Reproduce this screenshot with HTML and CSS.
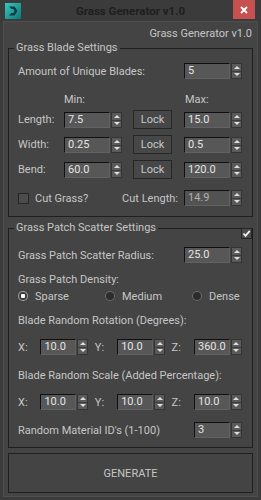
FILE: index.html
```html
<!DOCTYPE html>
<html lang="en">
<head>
  <meta charset="UTF-8">
  <title>Grass Generator v1.0</title>
  <link rel="stylesheet" href="styles.css">
</head>
<body>
  <div class="window">
    <div class="titlebar">
      <svg class="app-icon" viewBox="0 0 16 16">
        <defs>
          <linearGradient id="teal" x1="0" y1="0" x2="1" y2="1">
            <stop offset="0" stop-color="#3cc4c0"/>
            <stop offset="1" stop-color="#0b7a78"/>
          </linearGradient>
        </defs>
        <rect width="16" height="16" fill="url(#teal)"/>
        <path d="M4 3.5 H9.5 L12.5 8 L9.5 12.5 H4 L6.5 10 H8.5 L9.6 8 L8.5 6 H6.5 Z" fill="#0c3d3e"/>
      </svg>
      <div class="title">Grass Generator v1.0</div>
      <div class="close">
        <svg viewBox="0 0 8 8" width="8" height="8"><path d="M1 1 L7 7 M7 1 L1 7" stroke="#fff" stroke-width="1.8"/></svg>
      </div>
    </div>

    <div class="client">
      <div class="version">Grass Generator v1.0</div>

      <fieldset class="group blade">
        <legend>Grass Blade Settings</legend>

        <div class="row amount">
          <span class="span3">Amount of Unique Blades:</span>
          <div class="spinner"><span class="field">5</span><span class="arrows"></span></div>
        </div>

        <div class="row heads">
          <span></span>
          <span>Min:</span>
          <span></span>
          <span class="max">Max:</span>
        </div>

        <div class="row dims">
          <span>Length:</span>
          <div class="spinner"><span class="field">7.5</span><span class="arrows"></span></div>
          <div class="lock">Lock</div>
          <div class="spinner"><span class="field">15.0</span><span class="arrows"></span></div>
        </div>

        <div class="row dims">
          <span>Width:</span>
          <div class="spinner"><span class="field">0.25</span><span class="arrows"></span></div>
          <div class="lock">Lock</div>
          <div class="spinner"><span class="field">0.5</span><span class="arrows"></span></div>
        </div>

        <div class="row dims">
          <span>Bend:</span>
          <div class="spinner"><span class="field">60.0</span><span class="arrows"></span></div>
          <div class="lock">Lock</div>
          <div class="spinner"><span class="field">120.0</span><span class="arrows"></span></div>
        </div>

        <div class="row cut">
          <label class="check-label"><span class="check"></span>Cut Grass?</label>
          <span class="cut-length">Cut Length:</span>
          <div class="spinner disabled"><span class="field">14.9</span><span class="arrows"></span></div>
        </div>
      </fieldset>

      <div class="group-wrap">
        <fieldset class="group scatter">
          <legend>Grass Patch Scatter Settings</legend>

          <div class="line radius">
            <span>Grass Patch Scatter Radius:</span>
            <div class="spinner"><span class="field">25.0</span><span class="arrows"></span></div>
          </div>

          <div class="caption density">Grass Patch Density:</div>
          <div class="radios">
            <label><span class="radio on"></span>Sparse</label>
            <label><span class="radio"></span>Medium</label>
            <label><span class="radio"></span>Dense</label>
          </div>

          <div class="caption rotation">Blade Random Rotation (Degrees):</div>
          <div class="xyz first">
            <span>X:</span>
            <div class="spinner"><span class="field">10.0</span><span class="arrows"></span></div>
            <span>Y:</span>
            <div class="spinner"><span class="field">10.0</span><span class="arrows"></span></div>
            <span>Z:</span>
            <div class="spinner"><span class="field">360.0</span><span class="arrows"></span></div>
          </div>

          <div class="caption scale">Blade Random Scale (Added Percentage):</div>
          <div class="xyz second">
            <span>X:</span>
            <div class="spinner"><span class="field">10.0</span><span class="arrows"></span></div>
            <span>Y:</span>
            <div class="spinner"><span class="field">10.0</span><span class="arrows"></span></div>
            <span>Z:</span>
            <div class="spinner"><span class="field">10.0</span><span class="arrows"></span></div>
          </div>

          <div class="line material">
            <span>Random Material ID's (1-100)</span>
            <div class="spinner"><span class="field">3</span><span class="arrows"></span></div>
          </div>
        </fieldset>
        <span class="check checked">
          <svg viewBox="0 0 9 9" width="9" height="9"><path d="M1.5 4.5 L3.5 6.8 L7.8 1.8" fill="none" stroke="#f0f0f0" stroke-width="1.8"/></svg>
        </span>
      </div>

      <button class="generate">GENERATE</button>
    </div>
  </div>
</body>
</html>
```

FILE: styles.css
```css
* {
  box-sizing: border-box;
}

body {
  margin: 0;
  background: #3b3b3b;
  font-family: Roboto, "Liberation Sans", sans-serif;
  font-size: 11px;
  color: #c6c6c6;
}

.window {
  width: 261px;
  height: 500px;
  display: flex;
  flex-direction: column;
}

/* title bar */
.titlebar {
  height: 21px;
  display: grid;
  grid-template-columns: 1fr auto 1fr;
  align-items: start;
}

.app-icon {
  width: 16px;
  height: 16px;
  margin: 3px 0 0 5px;
}

.title {
  font-weight: bold;
  font-size: 11.5px;
  line-height: 22px;
  color: #1e1e1e;
}

.close {
  justify-self: end;
  width: 22px;
  height: 19px;
  margin-right: 6px;
  background: #c75050;
  display: flex;
  align-items: center;
  justify-content: center;
}

/* client area */
.client {
  flex: 1;
  margin: 0 3px 3px;
  padding: 0 4px;
  background: #444444;
  border: 1px solid #4f4f4f;
}

.version {
  margin-top: 5px;
  padding-right: 1px;
  line-height: 14px;
  text-align: right;
}

.group {
  margin: 0;
  min-width: 0;
  border: 1px solid #1f1f1f;
}

.group legend {
  margin-left: -4px;
  padding: 0 2px;
  line-height: 14px;
}

.blade {
  padding: 8px 10px 10px 9px;
}

.group-wrap {
  position: relative;
  margin-top: 4px;
}

.scatter {
  padding: 12px 10px 9px 9px;
}

/* blade rows */
.row {
  display: grid;
  grid-template-columns: 46px 58px 62px 58px;
  align-items: center;
}

.row.amount {
  height: 16px;
}

.span3 {
  grid-column: span 3;
}

.row.heads {
  height: 14px;
  margin-top: 13px;
}

.max {
  padding-left: 1px;
}

.row.dims {
  height: 19px;
  margin-top: 6px;
}

.row.heads + .row.dims {
  margin-top: 4px;
}

.row.cut {
  grid-template-columns: 1fr auto 58px;
  height: 16px;
  margin-top: 11px;
}

.cut-length {
  margin-right: 6px;
}

.lock {
  width: 39px;
  height: 19px;
  margin-left: 11px;
  border: 1px solid #262626;
  background: #474747;
  line-height: 17px;
  text-align: center;
}

/* spinners */
.spinner {
  display: flex;
  gap: 1px;
  height: 16px;
}

.field {
  flex: 1;
  min-width: 0;
  padding-left: 3px;
  background: #575757;
  border-top: 1px solid #101010;
  border-left: 1px solid #101010;
  border-right: 1px solid #626262;
  border-bottom: 1px solid #626262;
  color: #e4e4e4;
  line-height: 14px;
}

.disabled .field {
  color: #b0b0b0;
  background: #525252;
}

.arrows {
  width: 11px;
  display: flex;
  flex-direction: column;
  justify-content: space-around;
  align-items: center;
  background: linear-gradient(#5a5a5a 0 7px, #3c3c3c 7px 8px, #5a5a5a 8px);
  border: 1px solid #343434;
}

.arrows::before,
.arrows::after {
  content: "";
  border-left: 3px solid transparent;
  border-right: 3px solid transparent;
}

.arrows::before {
  border-bottom: 3px solid #dedede;
}

.arrows::after {
  border-top: 3px solid #dedede;
}

/* checkboxes and radios */
.check-label {
  display: flex;
  align-items: center;
  gap: 6px;
}

.check {
  width: 11px;
  height: 11px;
  background: #4c4c4c;
  border: 1px solid #262626;
  display: inline-flex;
  align-items: center;
  justify-content: center;
}

.check.checked {
  position: absolute;
  top: 7px;
  right: 1px;
  background: #4a4a4a;
}

.radios {
  display: grid;
  grid-template-columns: 87px 87px auto;
  height: 14px;
  margin-top: 2px;
  align-items: center;
}

.radios label {
  display: flex;
  align-items: center;
  gap: 7px;
}

.radio {
  width: 10px;
  height: 10px;
  border-radius: 50%;
  background: #2c2c2c;
  box-shadow: inset 0 0 0 1px #6e6e6e;
}

.radio.on {
  background: radial-gradient(circle, #ffffff 0 2px, #3a3a3a 2.5px);
  box-shadow: inset 0 0 0 1px #a8a8a8;
}

/* scatter rows */
.line {
  display: flex;
  justify-content: space-between;
  align-items: center;
  height: 16px;
}

.line.radius .spinner {
  width: 58px;
}

.line.material {
  margin-top: 12px;
}

.line.material .spinner {
  width: 48px;
}

.caption {
  line-height: 14px;
}

.density {
  margin-top: 10px;
}

.rotation {
  margin-top: 11px;
}

.scale {
  margin-top: 14px;
}

.xyz {
  display: grid;
  grid-template-columns: 16px 48px 16px 48px 16px 48px;
  justify-content: space-between;
  align-items: center;
  height: 16px;
  margin-top: 11px;
}

/* generate button */
.generate {
  display: block;
  width: 100%;
  height: 40px;
  margin-top: 5px;
  background: #444444;
  border: 1px solid #1f1f1f;
  color: #c6c6c6;
  font-family: inherit;
  font-size: 11px;
}
```
